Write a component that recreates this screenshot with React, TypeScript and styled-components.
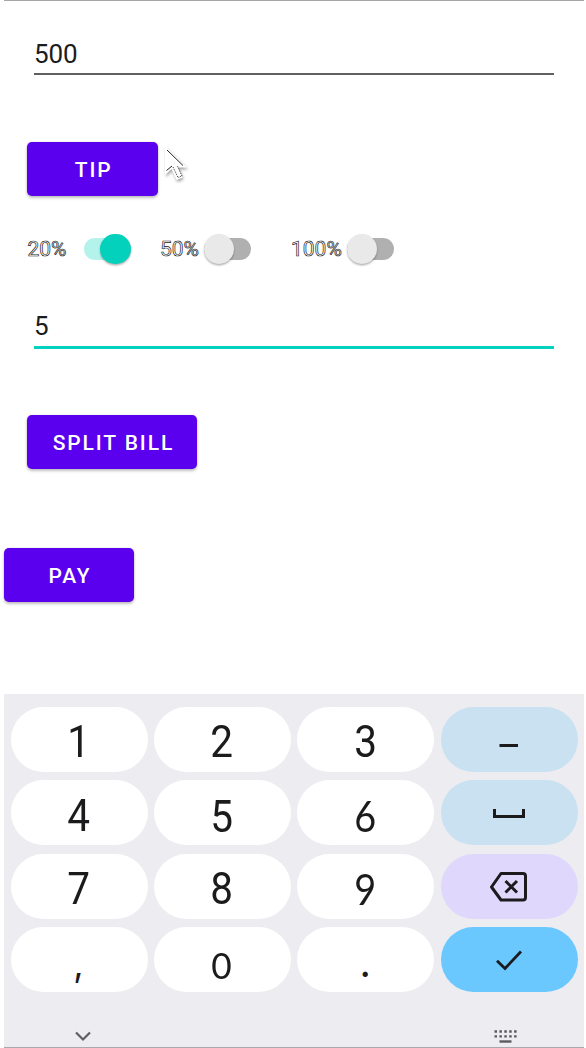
import React from 'react';
import styled, { createGlobalStyle } from 'styled-components';

const GlobalStyle = createGlobalStyle`
  *, *::before, *::after { box-sizing: border-box; }
  body { margin: 0; background: #fff; overflow: hidden; }
`;

const Screen = styled.main`
  position: relative;
  width: 580px;
  height: 1048px;
  margin-left: 4px;
  display: flex;
  flex-direction: column;
  border-top: 1px solid #a6a6a6;
  border-bottom: 1px solid #a9a9ab;
  background: #fff;
  font-family: Roboto, sans-serif;
  color: #1c1c1c;
`;

const Form = styled.section`
  height: 693px;
  display: flex;
  flex-direction: column;
  align-items: flex-start;
  padding-top: 33px;
`;

const Field = styled.div<{ $focused?: boolean }>`
  width: 520.5px;
  height: ${p => (p.$focused ? 43 : 41)}px;
  margin-left: 29.5px;
  padding-left: 0.4px;
  font-size: 26px;
  line-height: 40px;
  border-bottom: ${p => (p.$focused ? '3.5px solid #03d1bf' : '2px solid #606060')};
`;

const Button = styled.button<{ $width: number; $top: number; $left?: number }>`
  width: ${p => p.$width}px;
  height: 54px;
  margin: ${p => p.$top}px 0 0 ${p => p.$left ?? 0}px;
  padding: 2px 0 0 2px;
  border: 0;
  border-radius: 5px;
  background: #5a00ee;
  color: #fff;
  font: 500 21px/52px Roboto, sans-serif;
  letter-spacing: 1.9px;
  white-space: nowrap;
  box-shadow: 0 2px 3px rgba(0, 0, 0, 0.24), 0 0 2px rgba(0, 0, 0, 0.14);
`;

const Options = styled.div`
  display: flex;
  align-items: center;
  height: 36px;
  margin: 35px 0 0 23.5px;
`;

const Option = styled.label<{ $width: number; $gap: number }>`
  display: flex;
  align-items: center;
  gap: ${p => p.$gap}px;
  width: ${p => p.$width}px;
  font-size: 21px;
  line-height: 36px;
  color: #fff;
  -webkit-text-stroke: 0.7px #1a1a1a;
`;

const Track = styled.span<{ $on?: boolean }>`
  display: flex;
  align-items: center;
  justify-content: ${p => (p.$on ? 'flex-end' : 'flex-start')};
  width: 47px;
  height: 21.5px;
  border-radius: 11px;
  background: ${p => (p.$on ? '#b4f2ec' : '#b0b0b0')};
`;

const Thumb = styled.span<{ $on?: boolean }>`
  width: 30.5px;
  height: 30.5px;
  border-radius: 50%;
  background: ${p => (p.$on ? '#03d1bc' : '#e9e9e9')};
  box-shadow: 0 1.5px 2px rgba(0, 0, 0, 0.3);
`;

const Pointer = styled.svg`
  position: absolute;
  left: 157px;
  top: 141px;
  filter: drop-shadow(1px 2px 1.5px rgba(0, 0, 0, 0.35));
`;

const Keyboard = styled.section`
  flex: 1;
  padding: 13px 6.5px 0;
  background: #edecf1;
`;

const Keys = styled.div`
  display: grid;
  grid-template-columns: repeat(4, 137px);
  grid-auto-rows: 65px;
  column-gap: 6.4px;
  row-gap: 8.4px;
`;

const Key = styled.div<{ $bg?: string }>`
  display: flex;
  align-items: center;
  justify-content: center;
  border-radius: 33px;
  background: ${p => p.$bg ?? '#fff'};
`;

const Glyph = styled.span<{ $font?: string; $size?: number; $top?: number; $narrow?: number }>`
  font-family: ${p => p.$font ?? 'Roboto'}, sans-serif;
  font-size: ${p => p.$size ?? 45}px;
  line-height: 64px;
  color: #1b1b1d;
  padding-top: ${p => p.$top ?? 5}px;
  padding-right: 1px;
  transform: scaleX(${p => p.$narrow ?? 0.9});
`;

const BottomBar = styled.div`
  display: flex;
  justify-content: space-between;
  margin-top: 36px;
  padding: 0 60px 0 64px;
`;

const ink = '#1b1b1d';

export default function App() {
  return (
    <>
      <GlobalStyle />
      <Screen>
        <Form>
          <Field>500</Field>
          <Button $width={130.5} $top={67} $left={23.4}>TIP</Button>
          <Options>
            <Option $width={132.5} $gap={17}>20%<Track $on><Thumb $on /></Track></Option>
            <Option $width={131} $gap={4.5}>50%<Track><Thumb /></Track></Option>
            <Option $width={110} $gap={5}>100%<Track><Thumb /></Track></Option>
          </Options>
          <Field $focused style={{ marginTop: 39 }}>5</Field>
          <Button $width={170} $top={66} $left={23.4}>SPLIT BILL</Button>
          <Button $width={130} $top={79}>PAY</Button>
        </Form>

        <Keyboard>
          <Keys>
            <Key><Glyph $top={4}>1</Glyph></Key>
            <Key><Glyph>2</Glyph></Key>
            <Key><Glyph>3</Glyph></Key>
            <Key $bg="#cae1f1">
              <svg width="20" height="18" fill="none"><path d="M.5 14.500h18.500" stroke={ink} strokeWidth="3" /></svg>
            </Key>
            <Key><Glyph $top={6}>4</Glyph></Key>
            <Key><Glyph $top={8}>5</Glyph></Key>
            <Key><Glyph $font="Lato" $size={42} $top={6}>6</Glyph></Key>
            <Key $bg="#cae1f1">
              <svg width="34" height="12" fill="none"><path d="M2.500 2v7.500h29V2" stroke={ink} strokeWidth="3" /></svg>
            </Key>
            <Key><Glyph $top={6}>7</Glyph></Key>
            <Key><Glyph $top={6}>8</Glyph></Key>
            <Key><Glyph $font="Lato" $size={42} $top={6}>9</Glyph></Key>
            <Key $bg="#dfd8fc">
              <svg width="38" height="34" fill="none" stroke={ink} strokeWidth="3" strokeLinejoin="round">
                <path d="M11 4.500h22q2.500 0 2.500 2.500v21.500q0 2.500-2.500 2.500H11L1.500 18z" />
                <path d="m15.500 12 11.500 11.500m0-11.500L15.500 23.500" />
              </svg>
            </Key>
            <Key><Glyph $font="Inter" $size={36} $top={8} $narrow={1}>,</Glyph></Key>
            <Key><Glyph $font="Lato" $size={36} $top={10} $narrow={0.98}>0</Glyph></Key>
            <Key><Glyph $font="Lato" $size={42} $top={2} $narrow={1}>.</Glyph></Key>
            <Key $bg="#6bc8ff">
              <svg width="28" height="22" fill="none"><path d="m2 11.800 8 7.700L26 2.500" stroke={ink} strokeWidth="2.800" /></svg>
            </Key>
          </Keys>
          <BottomBar>
            <svg width="16" height="18" fill="none"><path d="m1 4.500 7 7 7-7" stroke="#5f5f63" strokeWidth="2.200" /></svg>
            <svg width="24" height="18" fill="none" stroke="#5a5a5e" strokeWidth="2.400">
              <path d="M.5 3.500h23M.5 8.400h23" strokeDasharray="2.500 2.400" />
              <path d="M5.500 13.500h12" />
            </svg>
          </BottomBar>
        </Keyboard>

        <Pointer width="34" height="44" viewBox="0 0 34 44" fill="none">
          <path d="M4 4v29l6.500-6 5 11 6-2.500-4.500-10h9z" fill="#fff" />
          <path d="M6 8l16 15.500M5.500 28.500l5.500-4.500" stroke="#222" strokeWidth="1" />
          <path d="m12 25 5 10.500 4-1.500-4.500-10" stroke="#333" strokeWidth="1" strokeDasharray="1 1" />
        </Pointer>
      </Screen>
    </>
  );
}
